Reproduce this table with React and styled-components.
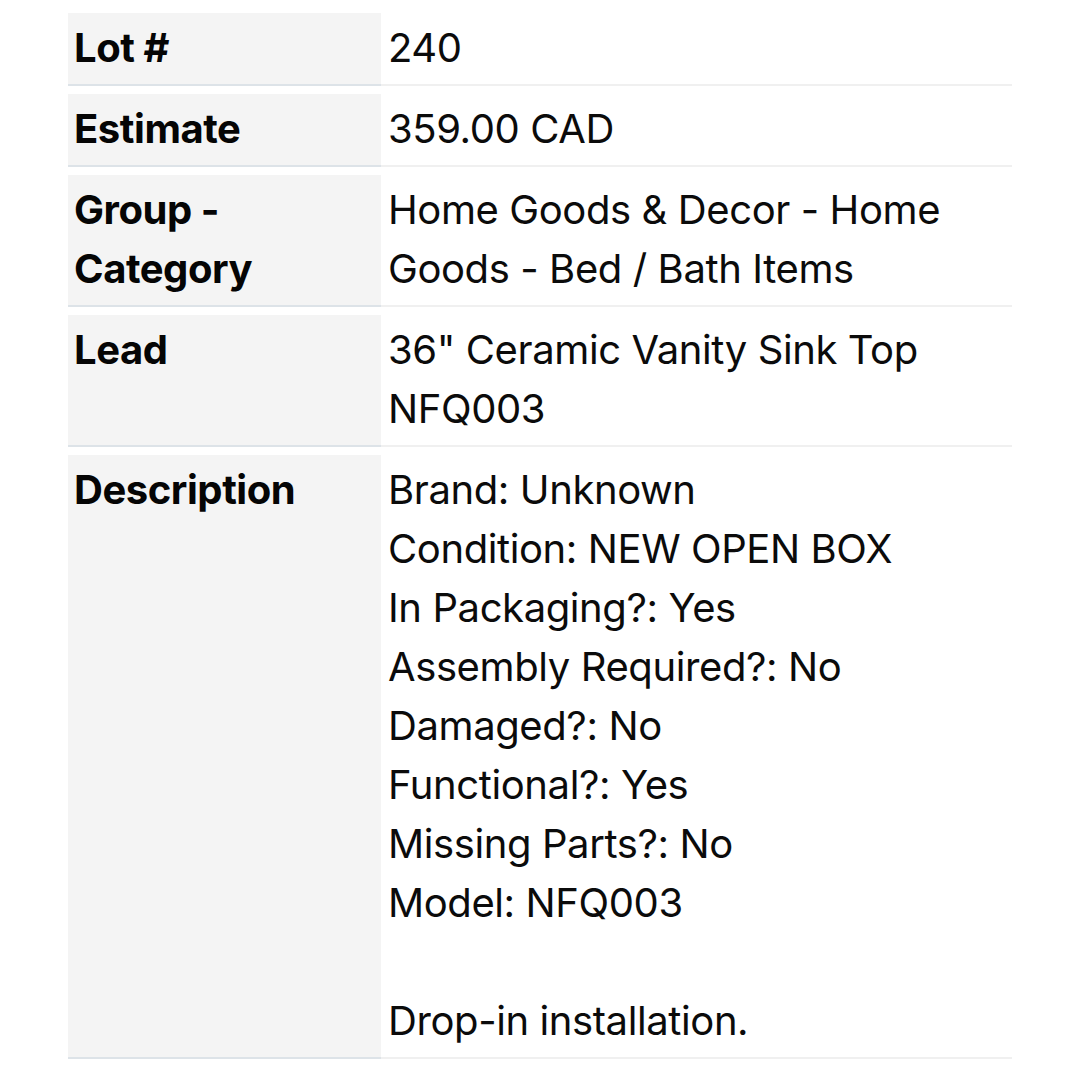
import React from "react";
import styled, { createGlobalStyle } from "styled-components";

const Global = createGlobalStyle`
  html, body {
    margin: 0;
    padding: 0;
    background: #fff;
  }
  body {
    font-family: Inter, "Noto Sans", Arial, sans-serif;
    color: #0b0b0b;
  }
`

const Table = styled.div`
  padding: 13px 68px 0 68px;
  display: flex;
  flex-direction: column;
  gap: 8px;
`

const Row = styled.div`
  display: grid;
  grid-template-columns: 313px 1fr;
`

const Label = styled.div`
  background: #f4f4f4;
  border-bottom: 2px solid #dde3e8;
  padding: 5px 6px 7px 6px;
  font-size: 40px;
  line-height: 59px;
  font-weight: 700;
  letter-spacing: -0.45px;
  color: #050505;
`

const Value = styled.div`
  border-bottom: 2px solid #f0f0f0;
  padding: 5px 7px 7px 7px;
  font-size: 40px;
  line-height: 59px;
  font-weight: 400;
  letter-spacing: -0.4px;
  color: #0b0b0b;
  white-space: ${props => props.pre ? 'pre-line' : 'normal'};
`

const rows = [
    {label: "Lot #", value: "240"},
    {label: "Estimate", value: "359.00 CAD"},
    {label: <>Group -<br/>Category</>, value: <>Home Goods &amp; Decor - Home<br/>Goods - Bed / Bath Items</>},
    {label: "Lead", value: <>36" Ceramic Vanity Sink Top<br/>NFQ003</>},
]

const description = `Brand: Unknown
Condition: NEW OPEN BOX
In Packaging?: Yes
Assembly Required?: No
Damaged?: No
Functional?: Yes
Missing Parts?: No
Model: NFQ003

Drop-in installation.`

export default function App(){
    return(
        <>
            <Global/>
            <Table>
                {rows.map((r, i) => (
                    <Row key={i}>
                        <Label>{r.label}</Label>
                        <Value>{r.value}</Value>
                    </Row>
                ))}
                <Row>
                    <Label>Description</Label>
                    <Value pre>{description}</Value>
                </Row>
            </Table>
        </>
    )
}
